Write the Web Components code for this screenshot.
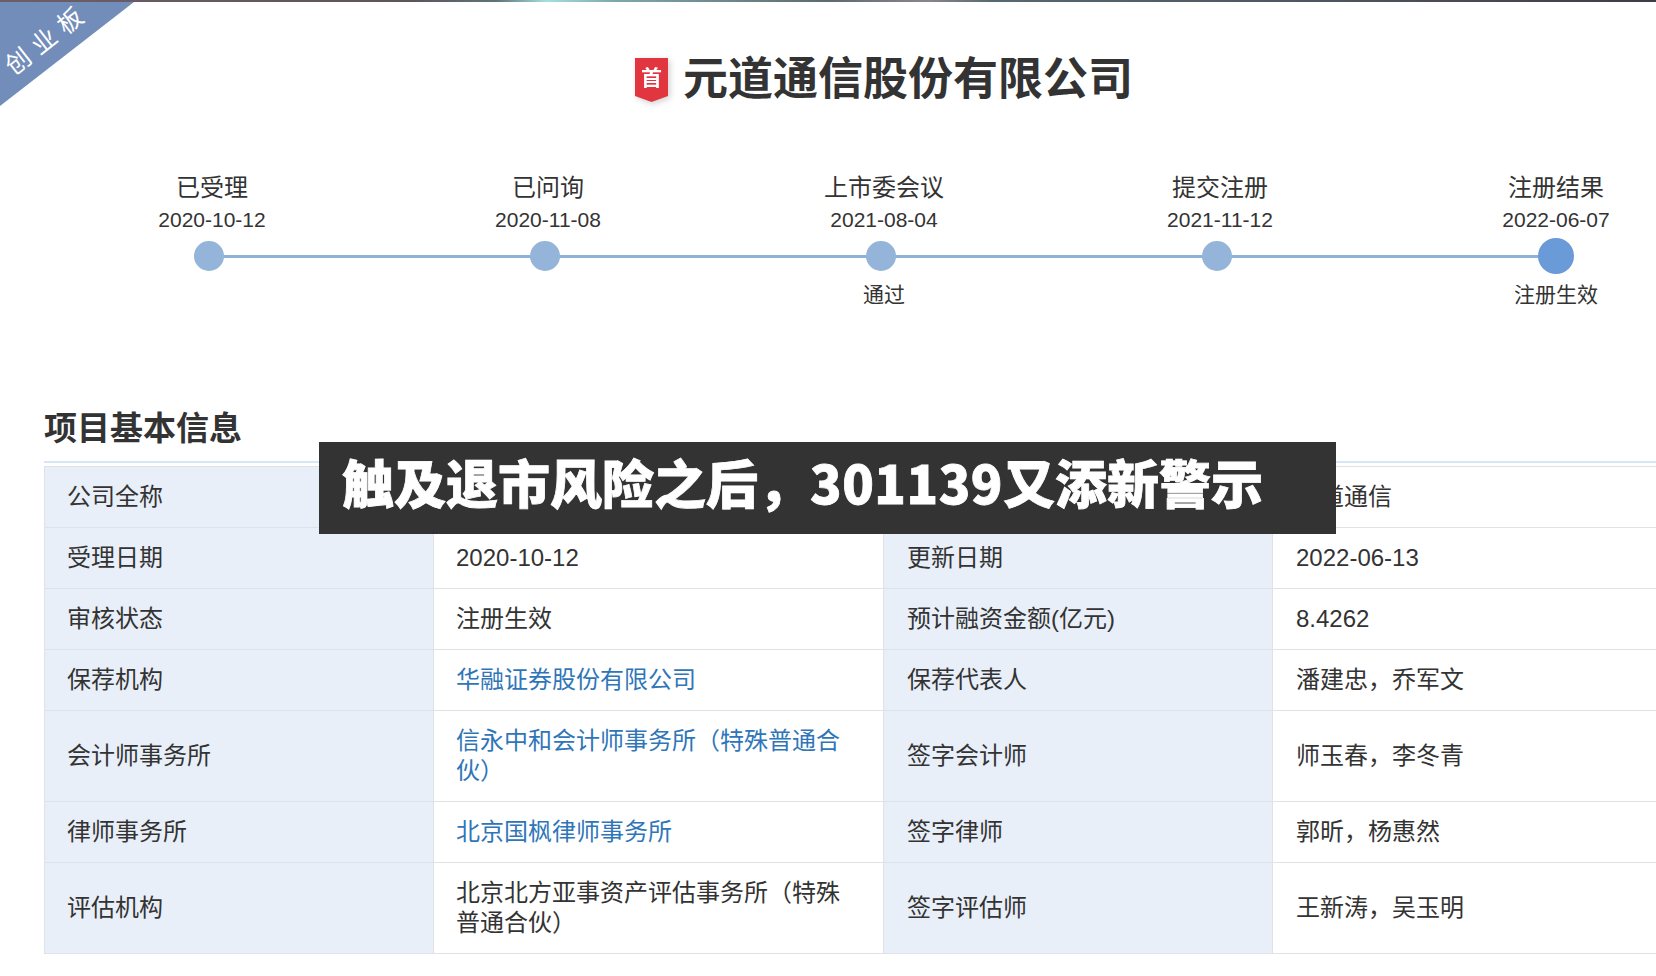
<!DOCTYPE html>
<html lang="zh">
<head>
<meta charset="utf-8">
<title>元道通信股份有限公司</title>
<style>
  html, body { margin: 0; height: 100%; background: #fff; overflow: hidden; }
  body {
    color: #333;
    font-family: "Liberation Sans", "Noto Sans CJK SC", sans-serif;
  }
</style>
</head>
<body>
<top-strip></top-strip>
<board-ribbon>创 业 板</board-ribbon>
<company-title>元道通信股份有限公司</company-title>

<process-line>
  <process-step first name="已受理" date="2020-10-12"></process-step>
  <process-step name="已问询" date="2020-11-08"></process-step>
  <process-step name="上市委会议" date="2021-08-04" note="通过"></process-step>
  <process-step name="提交注册" date="2021-11-12"></process-step>
  <process-step last name="注册结果" date="2022-06-07" note="注册生效"></process-step>
</process-line>

<section-title>项目基本信息</section-title>

<info-table>
  <info-row>
    <info-cell label>公司全称</info-cell><info-cell></info-cell>
    <info-cell label></info-cell><info-cell>元道通信</info-cell>
  </info-row>
  <info-row>
    <info-cell label>受理日期</info-cell><info-cell>2020-10-12</info-cell>
    <info-cell label>更新日期</info-cell><info-cell>2022-06-13</info-cell>
  </info-row>
  <info-row>
    <info-cell label>审核状态</info-cell><info-cell>注册生效</info-cell>
    <info-cell label>预计融资金额(亿元)</info-cell><info-cell>8.4262</info-cell>
  </info-row>
  <info-row>
    <info-cell label>保荐机构</info-cell><info-cell link>华融证券股份有限公司</info-cell>
    <info-cell label>保荐代表人</info-cell><info-cell>潘建忠，乔军文</info-cell>
  </info-row>
  <info-row>
    <info-cell label>会计师事务所</info-cell><info-cell link>信永中和会计师事务所（特殊普通合伙）</info-cell>
    <info-cell label>签字会计师</info-cell><info-cell>师玉春，李冬青</info-cell>
  </info-row>
  <info-row>
    <info-cell label>律师事务所</info-cell><info-cell link>北京国枫律师事务所</info-cell>
    <info-cell label>签字律师</info-cell><info-cell>郭昕，杨惠然</info-cell>
  </info-row>
  <info-row>
    <info-cell label>评估机构</info-cell><info-cell>北京北方亚事资产评估事务所（特殊普通合伙）</info-cell>
    <info-cell label>签字评估师</info-cell><info-cell>王新涛，吴玉明</info-cell>
  </info-row>
</info-table>

<news-banner>触及退市风险之后，<span style="letter-spacing:.5px">301139</span>又添新警示</news-banner>

<script>
// every element just sets its shadow markup in the constructor
class BaseEl extends HTMLElement {
  constructor(html) {
    super();
    this.attachShadow({ mode: 'open' }).innerHTML = html;
  }
}

class TopStrip extends BaseEl {
  constructor() {
    super(`<style>
      :host { display: block; height: 2px;
        background: linear-gradient(90deg, #6b5f66 0%, #5d555c 25%, #5f7478 30%, #a6dfe0 33%, #7fa8ac 37%, #5d6a70 50%, #8a858c 56%, #56686f 60%, #4f5560 80%, #403c46 100%); }
    </style>`);
  }
}
customElements.define('top-strip', TopStrip);

class BoardRibbon extends BaseEl {
  constructor() {
    super(`<style>
      :host { position: absolute; left: 0; top: 2px; width: 134px; height: 104px;
        background: #728db9; clip-path: polygon(0 0, 100% 0, 0 100%); }
      span { position: absolute; left: -6px; top: 24px; width: 100px; text-align: center;
        color: #fff; font-size: 25px; line-height: 30px; white-space: nowrap; word-spacing: 1px;
        transform: rotate(-38deg); }
    </style><span><slot></slot></span>`);
  }
}
customElements.define('board-ribbon', BoardRibbon);

class CompanyTitle extends BaseEl {
  constructor() {
    super(`<style>
      :host { display: flex; justify-content: center; align-items: center; gap: 15px;
        margin-top: 48px; height: 60px; padding-left: 112px; }
      .mark { width: 33px; height: 44px; flex: none; filter: drop-shadow(2px 2px 3px rgba(0,0,0,.18)); }
      svg { display: block; }
      h1 { margin: 0; font-size: 45px; line-height: 60px; font-weight: 700; color: #333; }
    </style>
    <div class="mark">
      <svg width="33" height="44" viewBox="0 0 33 44">
        <path d="M0 0H33V38L16.5 44L0 38Z" fill="#e1353f"/>
        <text x="16.5" y="27" text-anchor="middle" fill="#fff" font-size="21" font-weight="700"
          font-family="Noto Sans CJK SC, sans-serif">首</text>
      </svg>
    </div>
    <h1><slot></slot></h1>`);
  }
}
customElements.define('company-title', CompanyTitle);

class ProcessLine extends BaseEl {
  constructor() {
    super(`<style>
      :host { display: flex; margin-top: 63px; padding-left: 44px; }
    </style><slot></slot>`);
  }
}
customElements.define('process-line', ProcessLine);

class ProcessStep extends BaseEl {
  constructor() {
    super(`<style>
      :host { display: flex; flex-direction: column; align-items: center; flex: none;
        width: 336px; color: #333; }
      .name { font-size: 24px; line-height: 30px; }
      .date { font-size: 21px; line-height: 30px; margin-top: 2px; }
      .track { align-self: stretch; height: 36px; margin-top: 3px; display: flex;
        justify-content: center; align-items: center;
        background: linear-gradient(#8fb0d8, #8fb0d8) center / 100% 3px no-repeat; }
      .dot { width: 30px; height: 30px; border-radius: 50%; background: #95b4d9; margin-left: -6px; }
      .note { font-size: 21px; line-height: 30px; margin-top: 6px; height: 30px; }
      :host([first]) .track { background-position: right center; background-size: calc(50% + 3px) 3px; }
      :host([last]) .track { background-position: left center; background-size: 50% 3px; }
      :host([last]) .dot { width: 36px; height: 36px; background: #6b9ad8; margin-left: 0; }
    </style>
    <div class="name"></div>
    <div class="date"></div>
    <div class="track"><div class="dot"></div></div>
    <div class="note"></div>`);
  }
  connectedCallback() {
    const root = this.shadowRoot;
    root.querySelector('.name').textContent = this.getAttribute('name') || '';
    root.querySelector('.date').textContent = this.getAttribute('date') || '';
    root.querySelector('.note').textContent = this.getAttribute('note') || '';
  }
}
customElements.define('process-step', ProcessStep);

class SectionTitle extends BaseEl {
  constructor() {
    super(`<style>
      :host { display: block; margin: 97px 0 0 44px; padding-bottom: 10px;
        border-bottom: 2px solid #d8e5f5; font-size: 33px; line-height: 44px; font-weight: 700; color: #333; }
    </style><slot></slot>`);
  }
}
customElements.define('section-title', SectionTitle);

class InfoTable extends BaseEl {
  constructor() {
    super(`<style>
      :host { display: block; margin: 3px 0 0 44px; border-top: 1px solid #e0e2e6; border-left: 1px solid #e0e2e6; }
    </style><slot></slot>`);
  }
}
customElements.define('info-table', InfoTable);

class InfoRow extends BaseEl {
  constructor() {
    super(`<style>
      :host { display: grid; grid-template-columns: 389px 450px 389px 1fr; border-bottom: 1px solid #e0e2e6; }
    </style><slot></slot>`);
  }
}
customElements.define('info-row', InfoRow);

class InfoCell extends BaseEl {
  constructor() {
    super(`<style>
      :host { display: flex; align-items: center; padding: 15px 22px; font-size: 24px; line-height: 30px;
        min-height: 30px; color: #333; border-right: 1px solid #e0e2e6; }
      :host(:nth-child(n+3)) { padding-left: 23px; }
      :host([label]) { background: #e8eff8; }
      :host([link]) { color: #2f76b8; }
      :host(:last-child) { border-right: 0; }
    </style><div><slot></slot></div>`);
  }
}
customElements.define('info-cell', InfoCell);

class NewsBanner extends BaseEl {
  constructor() {
    super(`<style>
      :host { position: absolute; left: 319px; top: 442px; width: 1017px; height: 92px; box-sizing: border-box;
        padding-left: 23px; background: #333; color: #fff; font-size: 52px; line-height: 80px; font-weight: 900;
        -webkit-text-stroke: .8px #fff;
        font-family: "Noto Sans CJK SC", sans-serif; white-space: nowrap; }
    </style><slot></slot>`);
  }
}
customElements.define('news-banner', NewsBanner);
</script>
</body>
</html>
